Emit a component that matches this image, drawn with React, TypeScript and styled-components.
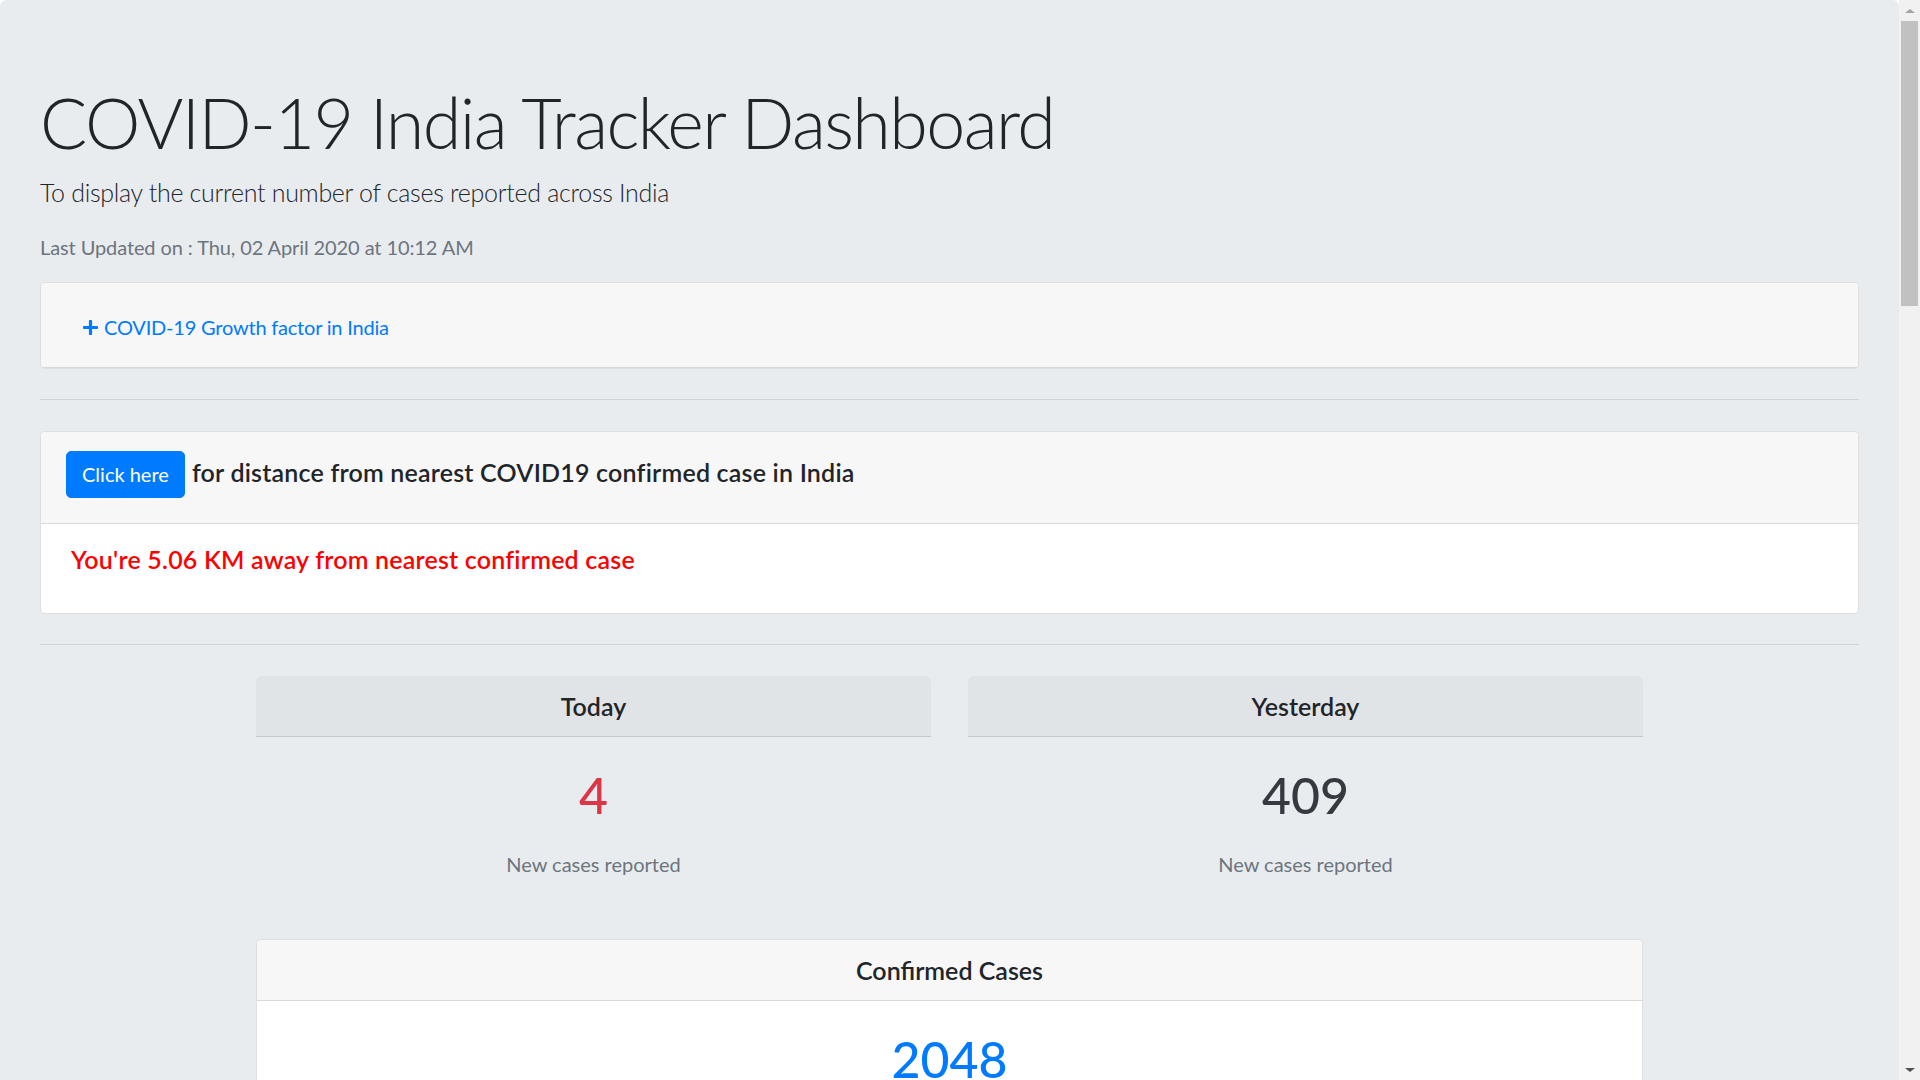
import React from "react";
import styled, { createGlobalStyle } from "styled-components";

const GlobalStyle = createGlobalStyle`
  html, body { overflow: hidden; background: #fff; }
  body {
    margin: 0;
    font-family: Lato, "Open Sans", sans-serif;
    font-size: 20px;
    line-height: 1.5;
    color: #212529;
  }
  * { box-sizing: border-box; }
`;

const Page = styled.div`
  margin-right: 21px;
`;

const Jumbotron = styled.main`
  background: #e9ecef;
  border-radius: 6px;
  padding: 80px 40px;
  min-height: 3933px;
`;

const Title = styled.h1`
  margin: 0 0 10px;
  font-size: 70px;
  font-weight: 300;
  line-height: 1.2;
  letter-spacing: -1.6px;
`;

const Lead = styled.p`
  margin: 0 0 20px;
  font-size: 25px;
  font-weight: 300;
  line-height: 1.5;
  letter-spacing: -0.3px;
`;

const Muted = styled.p`
  margin: 0 0 20px;
  color: #6c757d;
  letter-spacing: -0.1px;
`;

const Card = styled.section<{ $plain?: boolean }>`
  background: ${(p) => (p.$plain ? "transparent" : "#fff")};
  border: ${(p) => (p.$plain ? "0" : "1px solid rgba(0,0,0,.125)")};
  border-radius: 5px;
  overflow: hidden;
`;

const CardHeader = styled.header<{ $pad: string; $center?: boolean }>`
  display: flex;
  align-items: baseline;
  justify-content: ${(p) => (p.$center ? "center" : "flex-start")};
  padding: ${(p) => p.$pad};
  background: rgba(0, 0, 0, 0.03);
  border-bottom: 1px solid rgba(0, 0, 0, 0.125);
  border-radius: 5px 5px 0 0;
`;

const LinkButton = styled.button`
  display: inline-flex;
  align-items: center;
  gap: 6px;
  padding: 7.5px 15px 7.5px 16px;
  border: 1px solid transparent;
  background: none;
  color: #007bff;
  font: inherit;
  font-size: 20px;
  line-height: 1.5;
  letter-spacing: -0.2px;
  cursor: pointer;
`;

const PrimaryButton = styled.button`
  padding: 7.5px 15px;
  border: 1px solid #007bff;
  border-radius: 5px;
  background: #007bff;
  color: #fff;
  font: inherit;
  font-size: 20px;
  line-height: 1.5;
  cursor: pointer;
`;

const HeaderText = styled.h5`
  margin: 0 0 0 7px;
  font-size: 25px;
  font-weight: 600;
  line-height: 1.2;
  letter-spacing: 0.2px;
`;

const DistanceBody = styled.div`
  padding: 20px 30px 39px;
`;

const Alert = styled.h5`
  margin: 0;
  color: #ff0000;
  font-size: 25px;
  font-weight: 600;
  line-height: 1.2;
  letter-spacing: 0.2px;
`;

const Divider = styled.hr`
  margin: 30.5px 0;
  border: 0;
  border-top: 1px solid rgba(0, 0, 0, 0.1);
`;

const Centered = styled.div`
  width: 1387px;
  margin: 0 auto;
`;

const StatsRow = styled.div`
  display: grid;
  grid-template-columns: 1fr 1fr;
  gap: 37px;
  margin-bottom: 35px;
`;

const StatTitle = styled.h5`
  margin: 0;
  font-size: 25px;
  font-weight: 600;
  line-height: 1.2;
`;

const StatBody = styled.div`
  padding: 25px;
  text-align: center;
`;

const BigNumber = styled.h1<{ $color: string }>`
  margin: 3px 0 0;
  font-size: 50px;
  font-weight: 500;
  line-height: 1.2;
  color: ${(p) => p.$color};
`;

const StatLabel = styled.p`
  margin: 24px 0 0;
  color: #6c757d;
`;

const ScrollRail = styled.div`
  position: fixed;
  top: 0;
  right: 0;
  width: 21px;
  height: 100vh;
  background: #f1f1f1;
  display: flex;
  flex-direction: column;
`;

const ScrollArrow = styled.div<{ $down?: boolean }>`
  height: 21px;
  display: flex;
  align-items: center;
  justify-content: center;
  margin-top: ${(p) => (p.$down ? "auto" : "0")};
  &::before {
    content: "";
    width: 0;
    height: 0;
    border-left: 5px solid transparent;
    border-right: 5px solid transparent;
    ${(p) =>
      p.$down
        ? "border-top: 4px solid #505050;"
        : "border-bottom: 4px solid #a3a3a3;"}
  }
`;

const ScrollThumb = styled.div`
  margin: 0 2px;
  height: 285px;
  background: #c1c1c1;
`;

const PlusIcon = () => (
  <svg width="15" height="15" viewBox="0 32 448 448" fill="currentColor" aria-hidden="true">
    <path d="M416 208H272V64c0-17.67-14.33-32-32-32h-32c-17.67 0-32 14.33-32 32v144H32c-17.67 0-32 14.33-32 32v32c0 17.67 14.33 32 32 32h144v144c0 17.67 14.33 32 32 32h32c17.67 0 32-14.33 32-32V304h144c17.67 0 32-14.33 32-32v-32c0-17.67-14.33-32-32-32z" />
  </svg>
);

const stats = [
  { title: "Today", value: "4", color: "#dc3545" },
  { title: "Yesterday", value: "409", color: "#343a40" },
];

export default function App() {
  return (
    <>
      <GlobalStyle />
      <Page>
        <Jumbotron>
          <Title>COVID-19 India Tracker Dashboard</Title>
          <Lead>To display the current number of cases reported across India</Lead>
          <Muted>Last Updated on : Thu, 02 April 2020 at 10:12 AM</Muted>

          <Card>
            <CardHeader $pad="21px 25px 16px">
              <LinkButton type="button">
                <PlusIcon />
                COVID-19 Growth factor in India
              </LinkButton>
            </CardHeader>
          </Card>

          <Divider />

          <Card>
            <CardHeader $pad="19px 25px 25px">
              <PrimaryButton type="button">Click here</PrimaryButton>
              <HeaderText>for distance from nearest COVID19 confirmed case in India</HeaderText>
            </CardHeader>
            <DistanceBody>
              <Alert>You're 5.06 KM away from nearest confirmed case</Alert>
            </DistanceBody>
          </Card>

          <Divider />

          <Centered>
            <StatsRow>
              {stats.map((s) => (
                <Card $plain key={s.title}>
                  <CardHeader $pad="15px 25px" $center>
                    <StatTitle>{s.title}</StatTitle>
                  </CardHeader>
                  <StatBody>
                    <BigNumber $color={s.color}>{s.value}</BigNumber>
                    <StatLabel>New cases reported</StatLabel>
                  </StatBody>
                </Card>
              ))}
            </StatsRow>

            <Card>
              <CardHeader $pad="15px 25px" $center>
                <StatTitle>Confirmed Cases</StatTitle>
              </CardHeader>
              <StatBody>
                <BigNumber $color="#007bff">2048</BigNumber>
                <StatLabel>Total confirmed cases in India</StatLabel>
              </StatBody>
            </Card>
          </Centered>
        </Jumbotron>
      </Page>
      <ScrollRail aria-hidden="true">
        <ScrollArrow />
        <ScrollThumb />
        <ScrollArrow $down />
      </ScrollRail>
    </>
  );
}
